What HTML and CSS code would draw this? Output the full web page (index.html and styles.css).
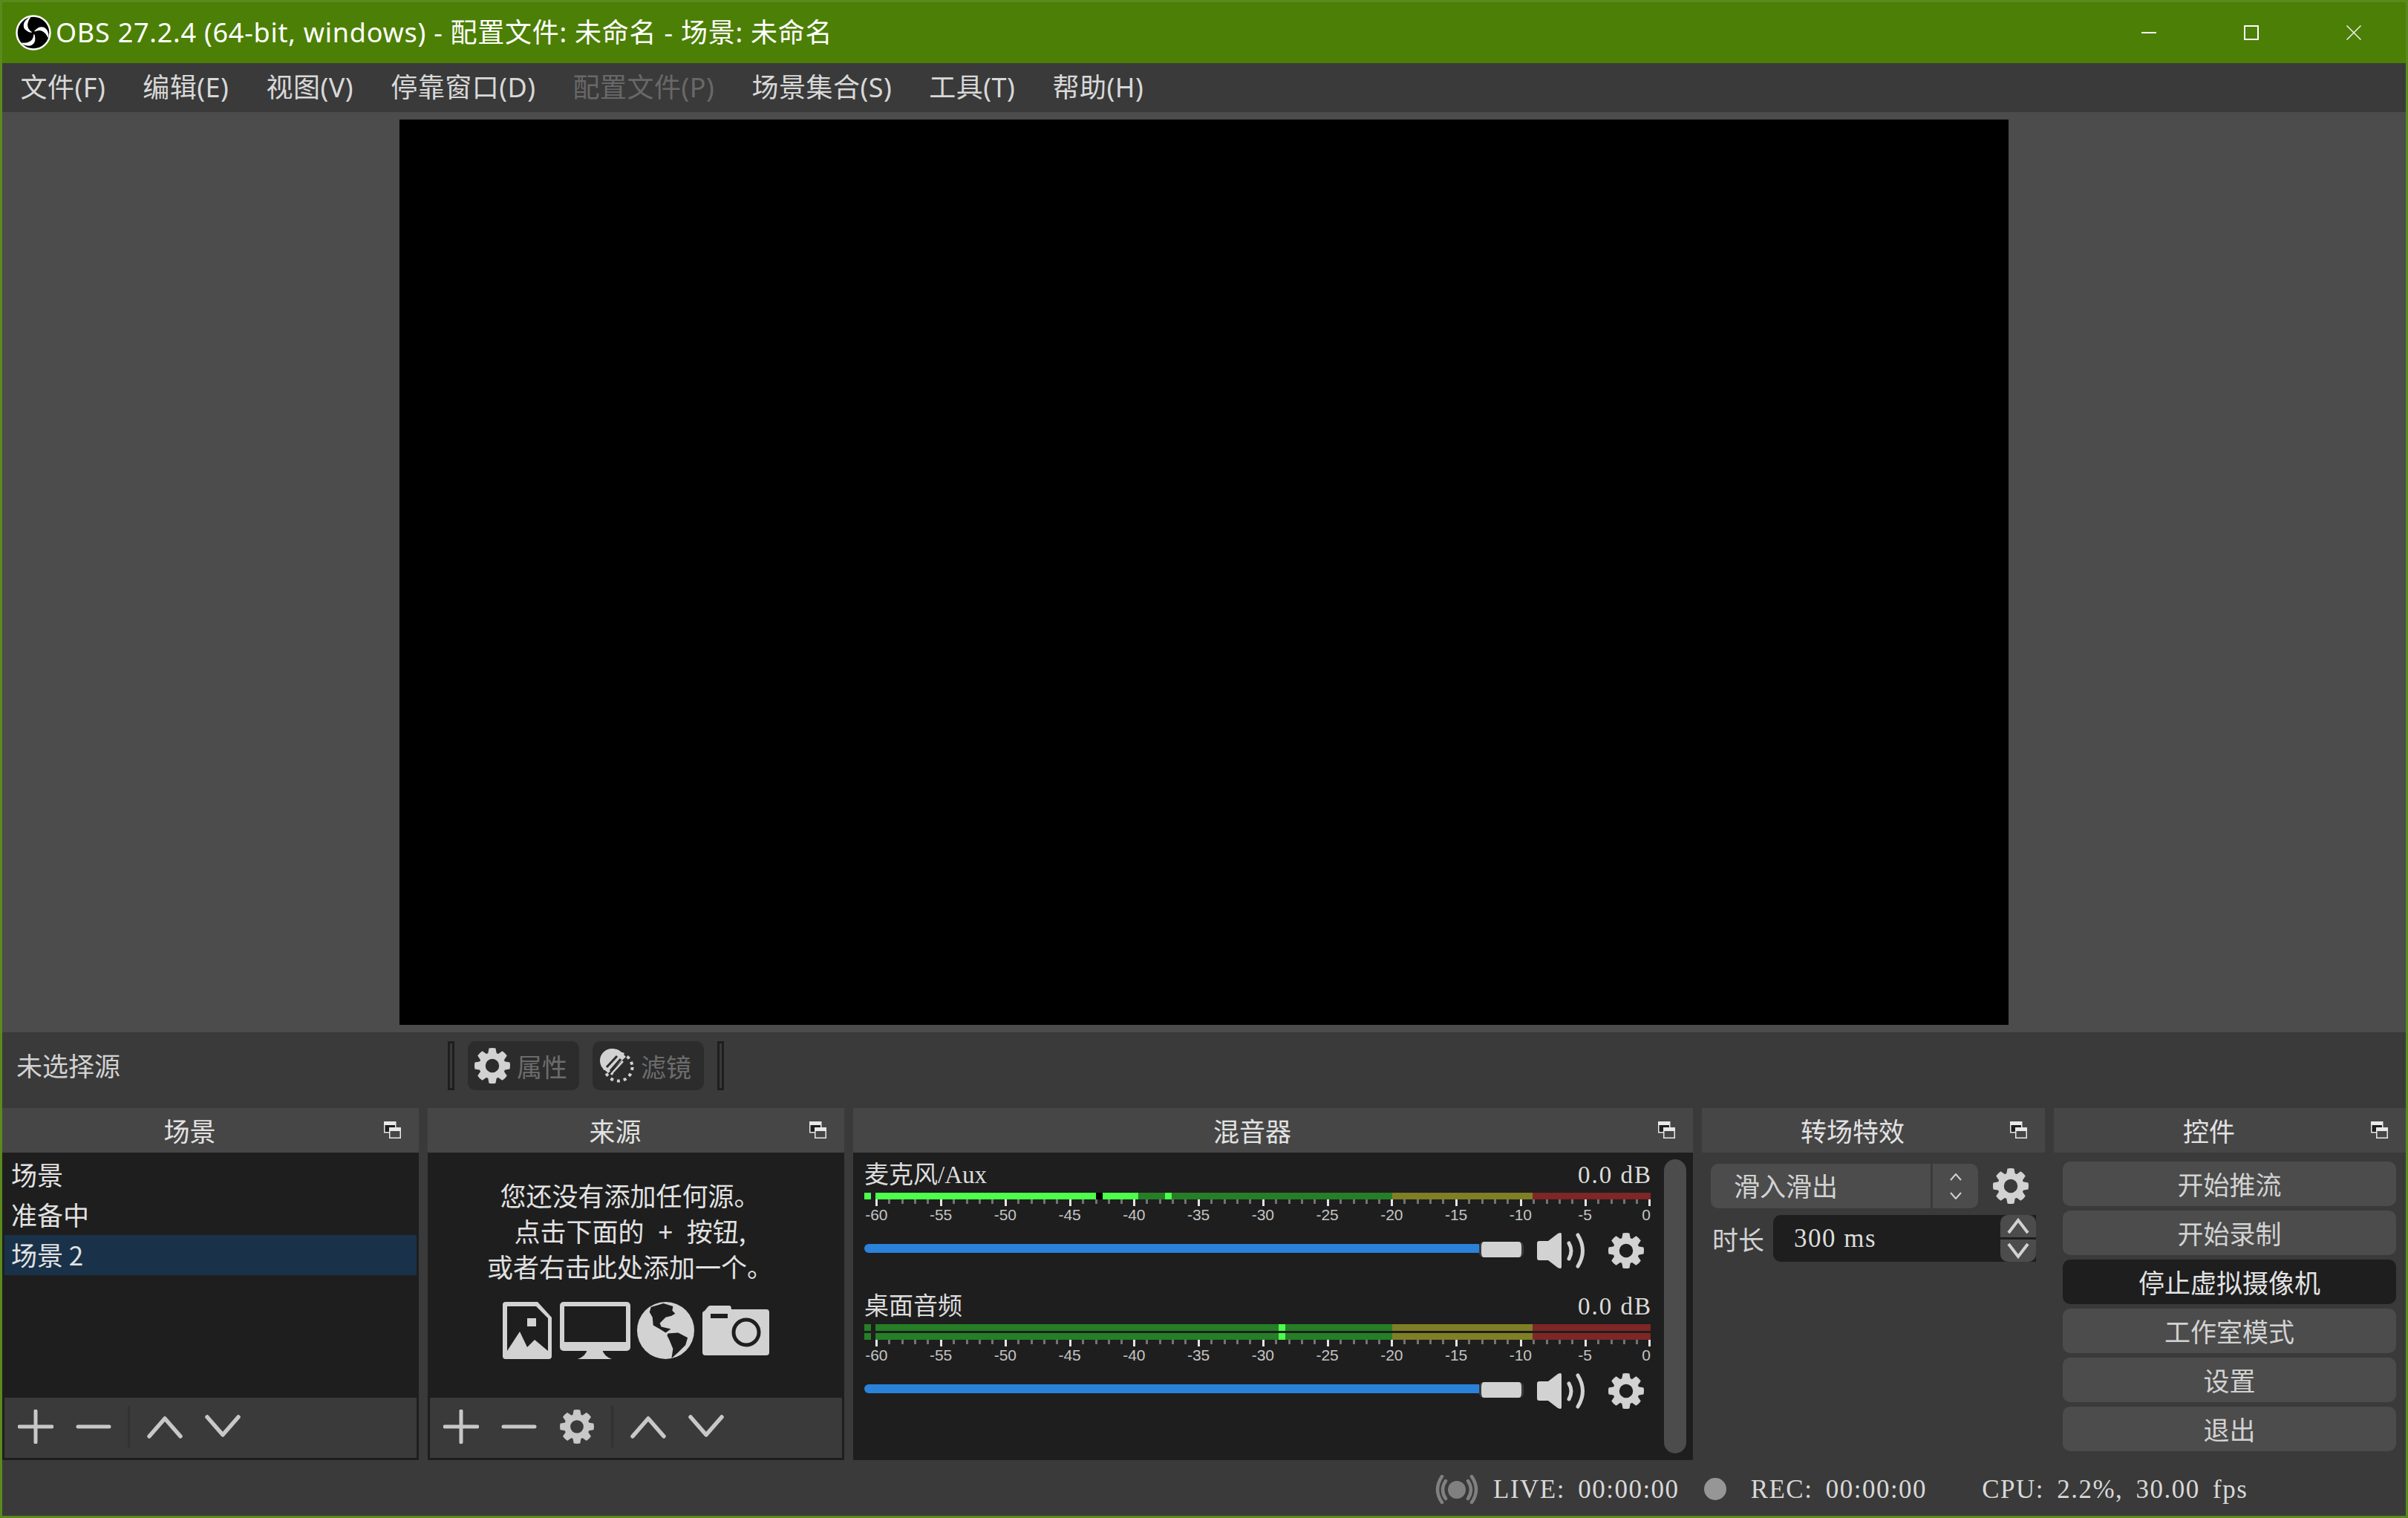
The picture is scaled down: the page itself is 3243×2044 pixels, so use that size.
FILE: index.html
```html
<!DOCTYPE html>
<html lang="zh-CN">
<head>
<meta charset="utf-8">
<title>OBS 27.2.4</title>
<link rel="stylesheet" href="styles.css">
</head>
<body>
<svg class="defs" width="0" height="0" aria-hidden="true">
  <defs>
    <g id="tooth"><path d="M19.5 0.5 q4.500 -1 9 0 L30 9 H18 Z"/></g>
    <symbol id="gear" viewBox="0 0 48 48">
      <circle cx="24" cy="24" r="13.500" fill="none" stroke="currentColor" stroke-width="8.500"/>
      <g fill="currentColor">
        <use href="#tooth"/>
        <use href="#tooth" transform="rotate(45 24 24)"/>
        <use href="#tooth" transform="rotate(90 24 24)"/>
        <use href="#tooth" transform="rotate(135 24 24)"/>
        <use href="#tooth" transform="rotate(180 24 24)"/>
        <use href="#tooth" transform="rotate(225 24 24)"/>
        <use href="#tooth" transform="rotate(270 24 24)"/>
        <use href="#tooth" transform="rotate(315 24 24)"/>
      </g>
    </symbol>
    <symbol id="float" viewBox="0 0 23 23">
      <rect x="0.750" y="0.750" width="15" height="14" fill="#1e1e1e" stroke="#e8e8e8" stroke-width="1.500"/>
      <rect x="0" y="0" width="16" height="5" fill="#e8e8e8"/>
      <rect x="7.750" y="8.750" width="14.500" height="13.500" fill="#464646" stroke="#e8e8e8" stroke-width="1.500"/>
      <rect x="7" y="8" width="16" height="5" fill="#e8e8e8"/>
    </symbol>
    <symbol id="plus" viewBox="0 0 48 46"><path d="M24 2V44M2 23H46" fill="none" stroke="currentColor" stroke-width="5" stroke-linecap="round"/></symbol>
    <symbol id="minus" viewBox="0 0 48 46"><path d="M3 23H45" fill="none" stroke="currentColor" stroke-width="5" stroke-linecap="round"/></symbol>
    <symbol id="up" viewBox="0 0 48 46"><path d="M3 36L24 12L45 36" fill="none" stroke="currentColor" stroke-width="5.500" stroke-linecap="round" stroke-linejoin="round"/></symbol>
    <symbol id="down" viewBox="0 0 48 46"><path d="M3 10L24 34L45 10" fill="none" stroke="currentColor" stroke-width="5.500" stroke-linecap="round" stroke-linejoin="round"/></symbol>
    <symbol id="speaker" viewBox="0 0 66 48">
      <path d="M0 14q0-3 3-3H15L28 1q2-1 4-1 1 0 1 3V45q0 3-1 3-2 0-4-1L15 37H3q-3 0-3-3Z" fill="currentColor"/>
      <path d="M43 14Q49 24 43 35M55 3Q68 24 55 45" fill="none" stroke="currentColor" stroke-width="5" stroke-linecap="round"/>
    </symbol>
    <symbol id="ruler" viewBox="0 0 1044 9">
      <path shape-rendering="crispEdges" fill="none" stroke="#e4e4e4" stroke-width="3" d="M1.500 0v9M88.500 0v9M175.500 0v9M262.500 0v9M348.500 0v9M435.500 0v9M522.500 0v9M609.500 0v9M695.500 0v9M782.500 0v9M869.500 0v9M956.500 0v9M1042.500 0v9"/>
      <path shape-rendering="crispEdges" fill="none" stroke="#737373" stroke-width="3" d="M18.500 0v6M36.500 0v6M53.500 0v6M70.500 0v6M105.500 0v6M123.500 0v6M140.500 0v6M157.500 0v6M192.500 0v6M210.500 0v6M227.500 0v6M244.500 0v6M279.500 0v6M297.500 0v6M314.500 0v6M331.500 0v6M365.500 0v6M383.500 0v6M400.500 0v6M417.500 0v6M452.500 0v6M470.500 0v6M487.500 0v6M504.500 0v6M539.500 0v6M557.500 0v6M574.500 0v6M591.500 0v6M626.500 0v6M644.500 0v6M661.500 0v6M678.500 0v6M712.500 0v6M730.500 0v6M747.500 0v6M764.500 0v6M799.500 0v6M817.500 0v6M834.500 0v6M851.500 0v6M886.500 0v6M904.500 0v6M921.500 0v6M938.500 0v6M973.500 0v6M991.500 0v6M1008.500 0v6M1025.500 0v6"/>
    </symbol>
  </defs>
</svg>

<div class="window">
  <header class="titlebar">
    <svg class="logo" viewBox="0 0 48 48">
      <circle cx="24" cy="24" r="22.500" fill="#000" stroke="#fff" stroke-width="2.500"/>
      <g fill="#fff">
        <path id="blade" d="M19.500 3.500C9.500 9 7 20 21.500 23.500C14 19 14 11 19.500 3.500Z" stroke="#fff" stroke-width="1.200"/>
        <use href="#blade" transform="rotate(120 24 24)"/>
        <use href="#blade" transform="rotate(240 24 24)"/>
      </g>
    </svg>
    <span class="title-text">OBS 27.2.4 (64-bit, windows) - 配置文件: 未命名 - 场景: 未命名</span>
    <div class="winbtns">
      <svg class="winbtn win-min" viewBox="0 0 20 20"><rect x="0" y="9" width="20" height="2" fill="#fff"/></svg>
      <svg class="winbtn win-max" viewBox="0 0 20 20"><rect x="1" y="1" width="18" height="18" fill="none" stroke="#fff" stroke-width="2"/></svg>
      <svg class="winbtn" viewBox="0 0 20 20"><path d="M0.500 0.500L19.500 19.500M19.500 0.500L0.500 19.500" stroke="#f0f0f0" stroke-width="1.500"/></svg>
    </div>
  </header>

  <nav class="menubar">
    <span class="menu-item">文件(F)</span>
    <span class="menu-item">编辑(E)</span>
    <span class="menu-item">视图(V)</span>
    <span class="menu-item">停靠窗口(D)</span>
    <span class="menu-item is-disabled">配置文件(P)</span>
    <span class="menu-item">场景集合(S)</span>
    <span class="menu-item">工具(T)</span>
    <span class="menu-item">帮助(H)</span>
  </nav>

  <main class="preview-area"><div class="preview"></div></main>

  <section class="source-bar">
    <span class="source-label">未选择源</span>
    <span class="bar-sep"></span>
    <button class="tool-btn">
      <svg class="tool-ico"><use href="#gear"/></svg><span>属性</span>
    </button>
    <button class="tool-btn">
      <svg class="tool-ico filter-ico" viewBox="0 0 46 46">
        <circle cx="25" cy="25" r="18.500" fill="none" stroke="#d2d2d2" stroke-width="4" stroke-dasharray="4 5"/>
        <path d="M16 0A16 16 0 0 0 0 16C0 22 3 27 8 30L11 33L35 11L30 6C27 2 22 0 16 0Z" fill="#d2d2d2" stroke="#2c2c2c" stroke-width="0"/>
        <path d="M10 31L25 13M15 35L31 17" stroke="#d2d2d2" stroke-width="3"/>
        <path d="M9 25L23 10M14 30L28 14M19 34L33 19" stroke="#2c2c2c" stroke-width="3"/>
      </svg><span>滤镜</span>
    </button>
    <span class="bar-sep"></span>
  </section>

  <section class="docks">
    <article class="dock dock-side">
      <h2 class="dock-head"><span>场景</span><svg class="dock-float"><use href="#float"/></svg></h2>
      <div class="dock-body">
        <ul class="scene-list">
          <li>场景</li>
          <li>准备中</li>
          <li class="is-selected">场景 2</li>
        </ul>
        <div class="toolbar">
          <svg class="tb-ico"><use href="#plus"/></svg>
          <svg class="tb-ico"><use href="#minus"/></svg>
          <span class="tb-sep"></span>
          <svg class="tb-ico"><use href="#up"/></svg>
          <svg class="tb-ico"><use href="#down"/></svg>
        </div>
      </div>
    </article>

    <article class="dock dock-side">
      <h2 class="dock-head"><span>来源</span><svg class="dock-float"><use href="#float"/></svg></h2>
      <div class="dock-body">
        <div class="empty-sources">
          <p>您还没有添加任何源。</p>
          <p>点击下面的 + 按钮,</p>
          <p>或者右击此处添加一个。</p>
          <div class="empty-icons">
            <svg class="ic-image" viewBox="0 0 66 77">
              <path d="M4 0H47L66 21V73a4 4 0 0 1-4 4H4a4 4 0 0 1-4-4V4a4 4 0 0 1 4-4Z" fill="#d2d2d2"/>
              <path d="M6 6H45L61 22V66L43 51L33 61L23 40L6 66Z" fill="#1e1e1e"/>
              <rect x="33" y="22" width="12" height="11" fill="#d2d2d2"/>
            </svg>
            <svg class="ic-monitor" viewBox="0 0 95 77">
              <path d="M37 64H57Q59 73 70 77H24Q35 73 37 64Z" fill="#d2d2d2"/>
              <rect x="0" y="0" width="95" height="66" rx="5" fill="#d2d2d2"/>
              <rect x="6" y="6" width="83" height="48" fill="#1e1e1e"/>
            </svg>
            <svg class="ic-globe" viewBox="0 0 78 78">
              <circle cx="39" cy="39" r="39" fill="#d2d2d2"/>
              <path d="M19 7L36 2L49 6L48 12L52 16L47 19L39 21L31 29L33 34L46 37L39 42L31 37L22 32L21 21L17 14Z" fill="#1e1e1e"/>
              <path d="M42 43L56 42L69 49L66 59L56 69L47 77L49 64L44 52L41 46Z" fill="#1e1e1e"/>
            </svg>
            <svg class="ic-camera" viewBox="0 0 90 67">
              <path d="M3 7L7 2Q8 0 11 0H36Q39 0 39 5H86Q90 5 90 9V63Q90 67 86 67H4Q0 67 0 63V10Q0 8 3 7Z" fill="#d2d2d2"/>
              <rect x="11" y="11" width="23" height="6" fill="#1e1e1e"/>
              <circle cx="59" cy="36" r="17" fill="#d2d2d2" stroke="#1e1e1e" stroke-width="5"/>
            </svg>
          </div>
        </div>
        <div class="toolbar">
          <svg class="tb-ico"><use href="#plus"/></svg>
          <svg class="tb-ico"><use href="#minus"/></svg>
          <svg class="tb-ico"><use href="#gear"/></svg>
          <span class="tb-sep"></span>
          <svg class="tb-ico"><use href="#up"/></svg>
          <svg class="tb-ico"><use href="#down"/></svg>
        </div>
      </div>
    </article>

    <article class="dock dock-mixer">
      <h2 class="dock-head"><span>混音器</span><svg class="dock-float"><use href="#float"/></svg></h2>
      <div class="dock-body mixer-body">
        <div class="channels">
          <div class="channel">
            <div class="ch-label"><span>麦克风/Aux</span><span class="ch-db">0.0 dB</span></div>
            <div class="meter">
              <i class="seg bright" style="width:9px"></i><i class="seg" style="width:6px"></i>
              <i class="seg bright" style="width:297px"></i><i class="seg black" style="width:9px"></i>
              <i class="seg bright" style="width:48px"></i><i class="seg dark" style="width:36px"></i>
              <i class="seg bright" style="width:9px"></i><i class="seg dark" style="width:297px"></i>
              <i class="seg yellow" style="width:189px"></i><i class="seg red" style="width:159px"></i>
            </div>
            <svg class="ruler"><use href="#ruler"/></svg>
            <div class="ruler-labels"><span>-60</span><span>-55</span><span>-50</span><span>-45</span><span>-40</span><span>-35</span><span>-30</span><span>-25</span><span>-20</span><span>-15</span><span>-10</span><span>-5</span><span class="last">0</span></div>
            <div class="ch-controls">
              <div class="fader"><div class="fader-fill"></div><div class="fader-handle"></div></div>
              <svg class="speaker"><use href="#speaker"/></svg>
              <svg class="ch-gear"><use href="#gear"/></svg>
            </div>
          </div>
          <div class="channel">
            <div class="ch-label"><span>桌面音频</span><span class="ch-db">0.0 dB</span></div>
            <div class="meter">
              <i class="seg dark" style="width:9px"></i><i class="seg" style="width:6px"></i>
              <i class="seg dark" style="width:543px"></i><i class="seg bright" style="width:9px"></i>
              <i class="seg dark" style="width:144px"></i>
              <i class="seg yellow" style="width:189px"></i><i class="seg red" style="width:159px"></i>
            </div>
            <div class="meter meter-second">
              <i class="seg dark" style="width:9px"></i><i class="seg" style="width:6px"></i>
              <i class="seg dark" style="width:543px"></i><i class="seg bright" style="width:9px"></i>
              <i class="seg dark" style="width:144px"></i>
              <i class="seg yellow" style="width:189px"></i><i class="seg red" style="width:159px"></i>
            </div>
            <svg class="ruler"><use href="#ruler"/></svg>
            <div class="ruler-labels"><span>-60</span><span>-55</span><span>-50</span><span>-45</span><span>-40</span><span>-35</span><span>-30</span><span>-25</span><span>-20</span><span>-15</span><span>-10</span><span>-5</span><span class="last">0</span></div>
            <div class="ch-controls">
              <div class="fader"><div class="fader-fill"></div><div class="fader-handle"></div></div>
              <svg class="speaker"><use href="#speaker"/></svg>
              <svg class="ch-gear"><use href="#gear"/></svg>
            </div>
          </div>
        </div>
        <div class="scrollbar"></div>
      </div>
    </article>

    <article class="dock dock-trans">
      <h2 class="dock-head"><span>转场特效</span><svg class="dock-float"><use href="#float"/></svg></h2>
      <div class="trans-body">
        <div class="trans-row">
          <div class="combo">
            <span class="combo-text">滑入滑出</span>
            <span class="combo-arrows">
              <svg viewBox="0 0 16 10"><path d="M1 9L8 1L15 9" fill="none" stroke="#d2d2d2" stroke-width="2"/></svg>
              <svg viewBox="0 0 16 10"><path d="M1 1L8 9L15 1" fill="none" stroke="#d2d2d2" stroke-width="2"/></svg>
            </span>
          </div>
          <svg class="trans-gear"><use href="#gear"/></svg>
        </div>
        <div class="duration-row">
          <span class="duration-label">时长</span>
          <div class="spin">
            <span class="spin-value">300 ms</span>
            <span class="spin-btns">
              <span class="spin-up"><svg viewBox="0 0 32 24"><path d="M3 21L16 4L29 21" fill="none" stroke="#d2d2d2" stroke-width="4"/></svg></span>
              <span class="spin-down"><svg viewBox="0 0 32 24"><path d="M3 3L16 20L29 3" fill="none" stroke="#d2d2d2" stroke-width="4"/></svg></span>
            </span>
          </div>
        </div>
      </div>
    </article>

    <article class="dock dock-ctrl">
      <h2 class="dock-head"><span>控件</span><svg class="dock-float"><use href="#float"/></svg></h2>
      <div class="ctrl-body">
        <button class="ctrl-btn">开始推流</button>
        <button class="ctrl-btn">开始录制</button>
        <button class="ctrl-btn is-active">停止虚拟摄像机</button>
        <button class="ctrl-btn">工作室模式</button>
        <button class="ctrl-btn">设置</button>
        <button class="ctrl-btn">退出</button>
      </div>
    </article>
  </section>

  <footer class="statusbar">
    <svg class="live-ico" viewBox="0 0 58 39">
      <circle cx="29" cy="20" r="12" fill="#808080"/>
      <path d="M14 8Q6 20 14 32M44 8Q52 20 44 32M9 2Q-3 20 9 37M49 2Q61 20 49 37" fill="none" stroke="#808080" stroke-width="4.500" stroke-linecap="round"/>
    </svg>
    <span class="stat stat-live">LIVE: 00:00:00</span>
    <span class="rec-dot"></span>
    <span class="stat stat-rec">REC: 00:00:00</span>
    <span class="stat stat-cpu">CPU: 2.2%, 30.00 fps</span>
  </footer>
</div>
</body>
</html>
```

FILE: styles.css
```css
* { box-sizing: border-box; }
html, body { margin: 0; padding: 0; background: #3a3a3a; }
body { overflow: hidden; font-family: "Noto Sans CJK SC", "Noto Sans", sans-serif; color: #d8d8d8; }
.defs { position: absolute; }
ul, p, h2 { margin: 0; padding: 0; list-style: none; font-weight: 400; }
button { font: inherit; border: 0; color: inherit; padding: 0; }

.window {
  width: 3243px; height: 2044px; display: flex; flex-direction: column;
  border: 3px solid #5a8a1e; background: #3a3a3a;
}

/* title bar */
.titlebar { flex: 0 0 82px; background: #4c7f05; display: flex; align-items: center; padding: 0 0 0 18px; color: #fff; }
.logo { width: 48px; height: 48px; flex: none; }
.title-text { margin-left: 6px; font: 36px/1 "Noto Sans", "Noto Sans CJK SC", sans-serif; letter-spacing: 0.750px; white-space: nowrap; }
.winbtns { margin-left: auto; display: flex; gap: 118px; padding-right: 60px; }
.winbtn { width: 20px; height: 20px; display: block; }

/* menu */
.menubar { flex: 0 0 66px; display: flex; align-items: center; padding-left: 0; background: #3a3a3a; }
.menu-item { padding: 0 25px 0 24.500px; font: 36px/1 "Noto Sans", "Noto Sans CJK SC", sans-serif; letter-spacing: 0.500px; margin-right: 0.500px; color: #d8d8d8; white-space: nowrap; }
.is-disabled { color: #686868; }

/* preview */
.preview-area { flex: 0 0 1239px; background: #4c4c4c; display: flex; justify-content: center; padding-top: 10px; }
.preview { width: 2167px; height: 1219px; background: #000; }

/* selected source bar */
.source-bar { flex: 0 0 102px; display: flex; align-items: flex-start; gap: 18px; padding: 12px 0 0 19px; background: #3a3a3a; }
.source-label { flex: 0 0 563px; line-height: 64px; font-size: 35px; color: #d2d2d2; }
.bar-sep { width: 9px; height: 66px; border: 3px solid #1e1e1e; }
.tool-btn { width: 150px; height: 66px; background: #2c2c2c; border-radius: 10px; display: flex; align-items: center; padding-left: 9px; gap: 9px; color: #6c6c6c; font-size: 34px; }
.tool-ico { width: 48px; height: 48px; color: #d2d2d2; flex: none; }
.filter-ico { width: 46px; height: 46px; margin-left: 1px; }

/* docks */
.docks { flex: 0 0 474px; display: flex; gap: 12px; }
.dock { display: flex; flex-direction: column; min-width: 0; }
.dock-side { flex: 0 0 561px; }
.dock-mixer { flex: 0 0 1131px; }
.dock-trans { flex: 0 0 462px; }
.dock-ctrl { flex: 0 0 474px; }
.dock-head { flex: 0 0 60px; position: relative; display: flex; align-items: center; justify-content: center; padding: 0 56px 2px 0; background: #464646; font-size: 35px; line-height: 1; color: #e2e2e2; }
.dock-float { position: absolute; right: 24px; top: 18px; width: 23px; height: 23px; }
.dock-body { flex: 1; display: flex; flex-direction: column; background: #1e1e1e; min-height: 0; }

/* scenes */
.scene-list { flex: 1; padding: 3px 3px 0; font-size: 35px; color: #e2e2e2; }
.scene-list li { height: 54px; line-height: 52px; padding-left: 9px; }
.scene-list .is-selected { background: #19324a; }

/* toolbar */
.toolbar { flex: 0 0 81px; display: flex; align-items: center; gap: 30px; padding: 0 0 3px 18px; margin: 0 3px 3px; background: #3a3a3a; color: #c8c8c8; }
.tb-ico { width: 48px; height: 46px; flex: none; }
.tb-sep { width: 3px; height: 56px; background: #323232; margin: 0 -7px 0 -8px; }

/* empty sources */
.empty-sources { flex: 1; text-align: center; padding-top: 33px; font-size: 35px; line-height: 48px; color: #e2e2e2; }
.empty-sources p { padding-right: 16px; word-spacing: 11px; }
.empty-icons { display: flex; justify-content: center; align-items: center; gap: 11px; margin-top: 24px; }
.ic-image { width: 66px; height: 77px; }
.ic-monitor { width: 95px; height: 77px; }
.ic-globe { width: 77px; height: 77px; margin-left: -2px; }
.ic-camera { width: 90px; height: 67px; }

/* mixer */
.mixer-body { flex-direction: row; justify-content: space-between; padding: 0 9px 9px 15px; }
.channels { width: 1059px; display: flex; flex-direction: column; gap: 21px; }
.ch-label { height: 54px; display: flex; justify-content: space-between; align-items: center; padding-top: 7px; font: 33px/1 "Liberation Serif", "Noto Sans CJK SC", serif; color: #dcdcdc; }
.ch-db { letter-spacing: 2px; margin-right: -2px; }
.meter { display: flex; height: 9px; }
.meter-second { margin-top: 3px; }
.seg { display: block; height: 9px; }
.bright { background: #4cff4c; }
.dark { background: #267f26; }
.yellow { background: #7f7f26; }
.red { background: #7f2626; }
.black { background: #000; }
.ruler { display: block; width: 1044px; height: 9px; margin-left: 15px; }
.ruler-labels { display: flex; height: 36px; margin-left: -27px; padding-top: 1px; font: 21px/22px "Liberation Sans", sans-serif; color: #c4c4c4; }
.ruler-labels span { flex: 0 0 86.750px; text-align: center; }
.ruler-labels .last { flex: 0 0 45px; text-align: right; }
.ch-controls { height: 48px; display: flex; align-items: flex-start; color: #d2d2d2; }
.fader { display: flex; align-items: center; height: 21px; margin-top: 12px; }
.fader-fill { width: 828px; height: 12px; margin-top: -3px; background: #2a82da; border-radius: 6px 0 0 6px; }
.fader-handle { width: 60px; height: 21px; background: #d2d2d2; border: solid #3a3a3a; border-width: 0 3px; border-radius: 6px; }
.speaker { width: 66px; height: 48px; margin-left: 18px; }
.ch-gear { width: 48px; height: 48px; margin-left: 30px; }
.scrollbar { width: 30px; margin-top: 9px; background: #4c4c4c; border-radius: 15px; }

/* transitions */
.trans-body { flex: 1; padding: 15px 12px 0; }
.trans-row { display: flex; align-items: center; height: 60px; color: #d2d2d2; }
.combo { width: 360px; height: 60px; display: flex; background: #4c4c4c; border-radius: 10px; font-size: 35px; color: #d2d2d2; }
.combo-text { flex: 1; line-height: 58px; padding-left: 31px; border-right: 3px solid #3a3a3a; }
.combo-arrows { width: 61px; display: flex; flex-direction: column; align-items: center; justify-content: center; gap: 15px; }
.combo-arrows svg { width: 16px; height: 10px; display: block; }
.trans-gear { width: 48px; height: 48px; margin-left: 20px; }
.duration-row { display: flex; align-items: center; margin-top: 9px; height: 63px; }
.duration-label { flex: 0 0 84px; padding-left: 2px; font-size: 35px; color: #d2d2d2; }
.spin { position: relative; width: 354px; height: 63px; background: #1e1e1e; border-radius: 10px 0 0 10px; display: flex; }
.spin-value { flex: 1; padding-left: 28px; font: 35px/63px "Liberation Serif", serif; letter-spacing: 1.500px; color: #dcdcdc; }
.spin-btns { width: 48px; display: flex; flex-direction: column; justify-content: space-between; }
.spin-up, .spin-down { height: 30px; background: #4c4c4c; display: flex; align-items: center; justify-content: center; }
.spin-up { border-radius: 10px 10px 0 0; }
.spin-down { border-radius: 0 0 10px 10px; }
.spin-btns svg { width: 32px; height: 24px; display: block; }

/* controls */
.ctrl-body { flex: 1; display: flex; flex-direction: column; gap: 6px; padding: 12px 13px 0 12px; }
.ctrl-btn { height: 60px; background: #4c4c4c; border-radius: 10px; font-size: 35px; line-height: 58px; text-align: center; color: #d2d2d2; }
.ctrl-btn.is-active { background: #1e1e1e; color: #e2e2e2; }

/* status */
.statusbar { flex: 0 0 75px; display: flex; align-items: center; padding-top: 3px; padding-left: 1930px; font: 35px/1 "Liberation Serif", serif; letter-spacing: 1.500px; word-spacing: 7px; color: #d8d8d8; white-space: nowrap; }
.live-ico { width: 58px; height: 39px; flex: none; }
.stat-live { margin-left: 20px; }
.rec-dot { width: 30px; height: 30px; border-radius: 50%; background: #969696; margin-left: 33px; flex: none; }
.stat-rec { margin-left: 33px; }
.stat-cpu { margin-left: 74px; }
```
